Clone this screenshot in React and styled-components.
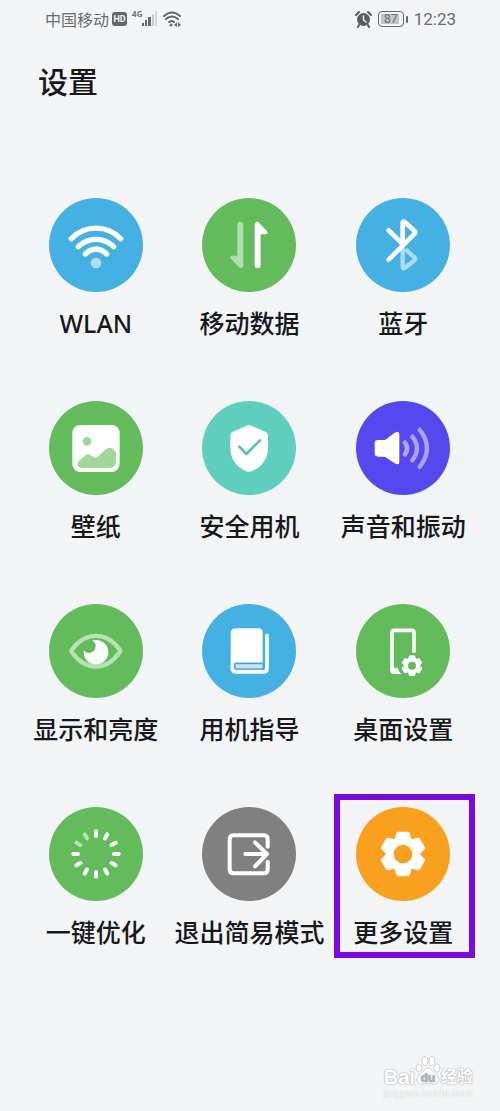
import React from "react";
import styled, { createGlobalStyle } from "styled-components";

const GlobalStyle = createGlobalStyle`
  * {
    box-sizing: border-box;
  }
  body {
    margin: 0;
    background: #f2f4f6;
    font-family: "Noto Sans", "Noto Sans CJK SC", sans-serif;
    color: #17181b;
  }
`;

const Page = styled.div`
  min-height: 100vh;
  display: flex;
  flex-direction: column;
`;

const StatusBar = styled.header`
  display: flex;
  align-items: center;
  justify-content: space-between;
  height: 38px;
  padding: 0 44px 0 45px;
  color: #6b6c6f;
`;

const StatusGroup = styled.div`
  display: flex;
  align-items: center;
  gap: ${(props) => props.$gap}px;
`;

const Carrier = styled.span`
  font-family: "Noto Sans CJK SC", sans-serif;
  font-size: 16px;
  line-height: 24px;
  margin-right: 3px;
`;

const HdBadge = styled.span`
  width: 15px;
  height: 14px;
  margin-right: 5px;
  border-radius: 3px;
  background: #66676a;
  color: #f2f4f6;
  font-family: Roboto, sans-serif;
  font-size: 9px;
  font-weight: 700;
  line-height: 14px;
  text-align: center;
`;

const Network = styled.span`
  align-self: flex-start;
  font-family: "Noto Sans CJK SC", sans-serif;
  font-size: 8px;
  font-weight: 700;
  line-height: 14px;
`;

const Battery = styled.span`
  display: flex;
  align-items: center;
  gap: 2px;
  &::after {
    content: "";
    width: 2px;
    height: 7px;
    border-radius: 1px;
    background: #66676a;
  }
`;

const BatteryLevel = styled.span`
  width: 26px;
  height: 16px;
  padding: 1px;
  border: 1px solid #66676a;
  border-radius: 4px;
  background: linear-gradient(#c3c4c6, #c3c4c6) 2px 2px / 18px 10px no-repeat;
  font-family: Roboto, sans-serif;
  font-size: 12px;
  line-height: 12px;
  text-align: center;
`;

const Clock = styled.time`
  font-family: Roboto, sans-serif;
  font-size: 17px;
  line-height: 24px;
`;

const Title = styled.h1`
  margin: 20px 0 0;
  padding: 0 38px;
  font-family: "Noto Sans CJK SC", sans-serif;
  font-size: 30px;
  font-weight: 500;
  line-height: 44px;
`;

const Grid = styled.main`
  display: grid;
  grid-template-columns: repeat(3, 1fr);
  row-gap: 60px;
  padding: 96px 20px 0 19px;
`;

const Tile = styled.button`
  position: relative;
  display: flex;
  flex-direction: column;
  align-items: center;
  gap: 13px;
  padding: 0;
  border: 0;
  background: none;
  color: inherit;
  font-family: inherit;
  font-size: 25px;
  font-weight: 500;
  line-height: 36px;
  white-space: nowrap;
  cursor: pointer;
  &::after {
    content: "";
    display: ${(props) => (props.$marked ? "block" : "none")};
    position: absolute;
    inset: -13px 5px -8px 8px;
    border: 6px solid #7a0be0;
  }
`;

const Disc = styled.span`
  width: 94px;
  height: 94px;
  border-radius: 50%;
  background: ${(props) => props.$color};
  svg {
    display: block;
    width: 100%;
    height: 100%;
  }
`;

const Watermark = styled.footer`
  margin-top: auto;
  align-self: flex-end;
  padding: 0 27px 11px 0;
  color: #ffffff;
`;

const Brand = styled.div`
  display: flex;
  align-items: flex-end;
  height: 32px;
  font-family: "Liberation Sans", "Noto Sans CJK SC", sans-serif;
  font-size: 20px;
  font-weight: 700;
  line-height: 20px;
  text-shadow: 0 0 1px #9b9da0, 0 0 2px #b5b7ba;
  svg {
    width: 26px;
    height: 32px;
  }
`;

const BrandCjk = styled.span`
  font-size: 16px;
`;

const Site = styled.div`
  font-family: "Liberation Sans", sans-serif;
  font-size: 11px;
  line-height: 13px;
  text-shadow: 0 0 1px #a9abae;
`;

const GREEN = "#63bb5b";
const BLUE = "#45b0e2";
const TEAL = "#5fcfbd";

// six-tooth cog centred on cx, cy; `scale` 1 gives a 65 unit radius
const gearPath = (cx, cy, scale) => {
  const tooth = [
    [-22, -42],
    [-15, -65],
    [15, -65],
    [22, -42],
  ];
  const points = [];
  for (let i = 0; i < 6; i++) {
    const a = (i * Math.PI) / 3;
    tooth.forEach(([x, y]) => {
      const px = cx + scale * (x * Math.cos(a) - y * Math.sin(a));
      const py = cy + scale * (x * Math.sin(a) + y * Math.cos(a));
      points.push(`${px.toFixed(1)} ${py.toFixed(1)}`);
    });
  }
  return `M${points.join("L")}Z`;
};

const Icon = ({ children }) => (
  <svg
    viewBox="0 0 282 282"
    fill="none"
    strokeLinecap="round"
    strokeLinejoin="round"
    aria-hidden="true"
  >
    {children}
  </svg>
);

const WlanIcon = () => (
  <Icon>
    <g stroke="#fff" strokeWidth="16">
      <path d="M67 122A102 102 0 0 1 215 122" />
      <path d="M88 146A75 75 0 0 1 194 146" />
      <path d="M109 168A43 43 0 0 1 173 168" />
    </g>
    <circle cx="141" cy="195" r="16" fill="#b3ddf3" />
  </Icon>
);

const DataIcon = () => {
  const arrow =
    "M106 80a9 9 0 0 1 18 0V202c0 8-7 11-13 6L88 184c-5-5-3-11 4-11H106Z";
  return (
    <Icon>
      <path d={arrow} fill="#b1ddad" />
      <path d={arrow} fill="#fff" transform="rotate(180 141 141)" />
    </Icon>
  );
};

const BluetoothIcon = () => (
  <Icon>
    <path
      d="M140 150V207Q140 215 147 209L176 187Q180 183 176 179L153 158"
      stroke="#a9dcf6"
      strokeWidth="13"
    />
    <path
      d="M98 97L140 138V76Q140 68 147 73L176 99Q180 103 176 107L98 185"
      stroke="#fff"
      strokeWidth="14"
    />
  </Icon>
);

const WallpaperIcon = () => (
  <Icon>
    <rect x="70" y="72" width="142" height="141" rx="24" fill="#fff" />
    <circle cx="114" cy="121" r="13" fill="#a0d49a" />
    <path
      d="M86 184L107 164Q116 156 125 163Q138 174 145 168L170 145Q182 135 193 145L201 154V181Q201 201 181 201H101Q80 201 86 184Z"
      fill="#a0d89a"
    />
  </Icon>
);

const ShieldIcon = () => (
  <Icon>
    <path
      d="M134 74Q141 70 148 74L193 94Q198 97 198 103V140C198 178 174 201 148 211Q141 214 134 211C108 201 85 178 85 140V103Q85 97 90 94Z"
      fill="#fff"
    />
    <path d="M112 137L133 159L174 118" stroke="#5fbfae" strokeWidth="8" />
  </Icon>
);

const SoundIcon = () => (
  <Icon>
    <path
      d="M66 117H83Q88 117 92 113L116 95Q130 88 130 100V182Q130 194 116 187L92 171Q88 167 83 167H66Q56 167 56 157V127Q56 117 66 117Z"
      fill="#fff"
    />
    <g stroke="#aca5fa">
      <path d="M147 125Q160 142 147 160" strokeWidth="14" />
      <path d="M169 107Q197 142 169 178" strokeWidth="13" />
      <path d="M191 86Q235 142 191 198" strokeWidth="13" />
    </g>
  </Icon>
);

const EyeIcon = () => (
  <Icon>
    <circle cx="141" cy="145" r="37" fill="#fff" />
    <circle cx="120" cy="127" r="20" fill={GREEN} />
    <path
      d="M69 137C109 82 173 82 212 137Q215 141 212 145C173 202 109 202 69 145Q66 141 69 137Z"
      stroke="#b6e2b1"
      strokeWidth="13"
    />
  </Icon>
);

const BookIcon = () => (
  <Icon>
    <path d="M86 89Q86 73 102 73H170Q182 73 182 85V200H86Z" fill="#fff" />
    <path
      d="M195 94V193Q195 204 184 204H103Q92 204 92 193V178"
      stroke="#fff"
      strokeWidth="11"
    />
    <rect
      x="98"
      y="178"
      width="86"
      height="17"
      rx="4"
      fill="#cde5f3"
      stroke="#4aa5d1"
      strokeWidth="5"
    />
  </Icon>
);

const DesktopIcon = () => (
  <Icon>
    <path
      d="M174 146V86Q174 79 167 79H115Q108 79 108 86V198"
      stroke="#fff"
      strokeWidth="11"
      strokeLinecap="butt"
    />
    <path d="M103 191H125Q127 202 136 210H113Q103 210 103 200Z" fill="#fff" />
    <path
      d={gearPath(168, 185, 0.43)}
      fill="#fff"
      stroke="#fff"
      strokeWidth="6"
    />
    <circle cx="168" cy="185" r="12" fill={GREEN} />
  </Icon>
);

const OptimizeIcon = () => (
  <Icon>
    {Array.from({ length: 12 }, (_, i) => (
      <path
        key={i}
        d="M141 73V87"
        stroke={i > 9 ? "#b3e3ae" : "#fff"}
        strokeWidth="12"
        transform={`rotate(${i * 30} 141 141)`}
      />
    ))}
  </Icon>
);

const ExitIcon = () => (
  <Icon>
    <g stroke="#fff" strokeWidth="12">
      <path d="M197 119V97Q197 85 185 85H95Q83 85 83 97V187Q83 199 95 199H185Q197 199 197 187V164" />
      <path d="M130 141H194M159 106L195 141L159 178" />
    </g>
  </Icon>
);

const MoreIcon = () => (
  <Icon>
    <path
      d={gearPath(141, 141, 0.94)}
      fill="#fff"
      stroke="#fff"
      strokeWidth="12"
    />
    <circle cx="141" cy="141" r="28" fill="#f9a11f" />
  </Icon>
);

const items = [
  { label: "WLAN", color: BLUE, icon: WlanIcon },
  { label: "移动数据", color: GREEN, icon: DataIcon },
  { label: "蓝牙", color: BLUE, icon: BluetoothIcon },
  { label: "壁纸", color: GREEN, icon: WallpaperIcon },
  { label: "安全用机", color: TEAL, icon: ShieldIcon },
  { label: "声音和振动", color: "#5548ef", icon: SoundIcon },
  { label: "显示和亮度", color: GREEN, icon: EyeIcon },
  { label: "用机指导", color: BLUE, icon: BookIcon },
  { label: "桌面设置", color: GREEN, icon: DesktopIcon },
  { label: "一键优化", color: GREEN, icon: OptimizeIcon },
  { label: "退出简易模式", color: "#808080", icon: ExitIcon },
  { label: "更多设置", color: "#f9a11f", icon: MoreIcon, marked: true },
];

const SignalIcon = () => (
  <svg width="16" height="16" viewBox="0 0 16 16" fill="#66676a">
    <rect x="0" y="12" width="2" height="3" />
    <rect x="3" y="9" width="2" height="6" />
    <rect x="6" y="6" width="3" height="9" />
    <rect x="10" y="3" width="2" height="12" fill="#c9cacc" />
    <rect x="13" y="0" width="2" height="15" fill="#d5d6d8" />
  </svg>
);

const WifiIcon = () => (
  <svg
    width="20"
    height="18"
    viewBox="0 0 20 18"
    fill="none"
    stroke="#66676a"
    strokeWidth="2"
    strokeLinecap="round"
  >
    <path d="M2 6Q10 -1 18 6M4 9Q10 4 16 9M7 12Q10 10 12 12" />
    <circle cx="9" cy="15" r="1.5" fill="#66676a" stroke="none" />
    <path
      d="M15 12l-3 3 3 2zM16 12l3 3-3 2z"
      fill="#66676a"
      stroke="none"
    />
  </svg>
);

const AlarmIcon = () => (
  <svg
    width="17"
    height="17"
    viewBox="0 0 17 17"
    fill="none"
    stroke="#5d5e61"
    strokeWidth="2"
    strokeLinecap="round"
  >
    <path d="M1 4L4 1M16 4L13 1M4 14L3 16M13 14L14 16" />
    <circle cx="8.5" cy="8.5" r="6.5" fill="#5d5e61" stroke="none" />
    <path d="M8.5 5V9L11 11" stroke="#f2f4f6" strokeWidth="1.4" />
  </svg>
);

const PawIcon = () => (
  <svg viewBox="0 0 26 32" fill="#fff" stroke="#c3c5c8" strokeWidth="0.8">
    <ellipse cx="4" cy="13" rx="3" ry="4" />
    <ellipse cx="10" cy="6" rx="3" ry="4.5" />
    <ellipse cx="17" cy="6" rx="3" ry="4.5" />
    <ellipse cx="22" cy="13" rx="3" ry="4" />
    <path d="M13 13C17 13 18 18 22 20C26 24 23 30 18 29Q13 28 8 29C2 30 0 24 4 20C8 18 9 13 13 13Z" />
    <text
      x="13"
      y="27"
      textAnchor="middle"
      fill="#b3b5b8"
      stroke="none"
      fontFamily="Liberation Sans, sans-serif"
      fontSize="12"
    >
      du
    </text>
  </svg>
);

const App = () => {
  return (
    <Page>
      <GlobalStyle />
      <StatusBar>
        <StatusGroup $gap={4}>
          <StatusGroup $gap={0}>
            <Carrier>中国移动</Carrier>
            <HdBadge>HD</HdBadge>
            <Network>4G</Network>
            <SignalIcon />
          </StatusGroup>
          <WifiIcon />
        </StatusGroup>
        <StatusGroup $gap={6}>
          <AlarmIcon />
          <Battery>
            <BatteryLevel>87</BatteryLevel>
          </Battery>
          <Clock>12:23</Clock>
        </StatusGroup>
      </StatusBar>
      <Title>设置</Title>
      <Grid>
        {items.map(({ label, color, icon: ItemIcon, marked }) => (
          <Tile key={label} type="button" $marked={marked}>
            <Disc $color={color}>
              <ItemIcon />
            </Disc>
            {label}
          </Tile>
        ))}
      </Grid>
      <Watermark>
        <Brand>
          Bai
          <PawIcon />
          <BrandCjk>经验</BrandCjk>
        </Brand>
        <Site>jingyan.baidu.com</Site>
      </Watermark>
    </Page>
  );
};

export default App;
